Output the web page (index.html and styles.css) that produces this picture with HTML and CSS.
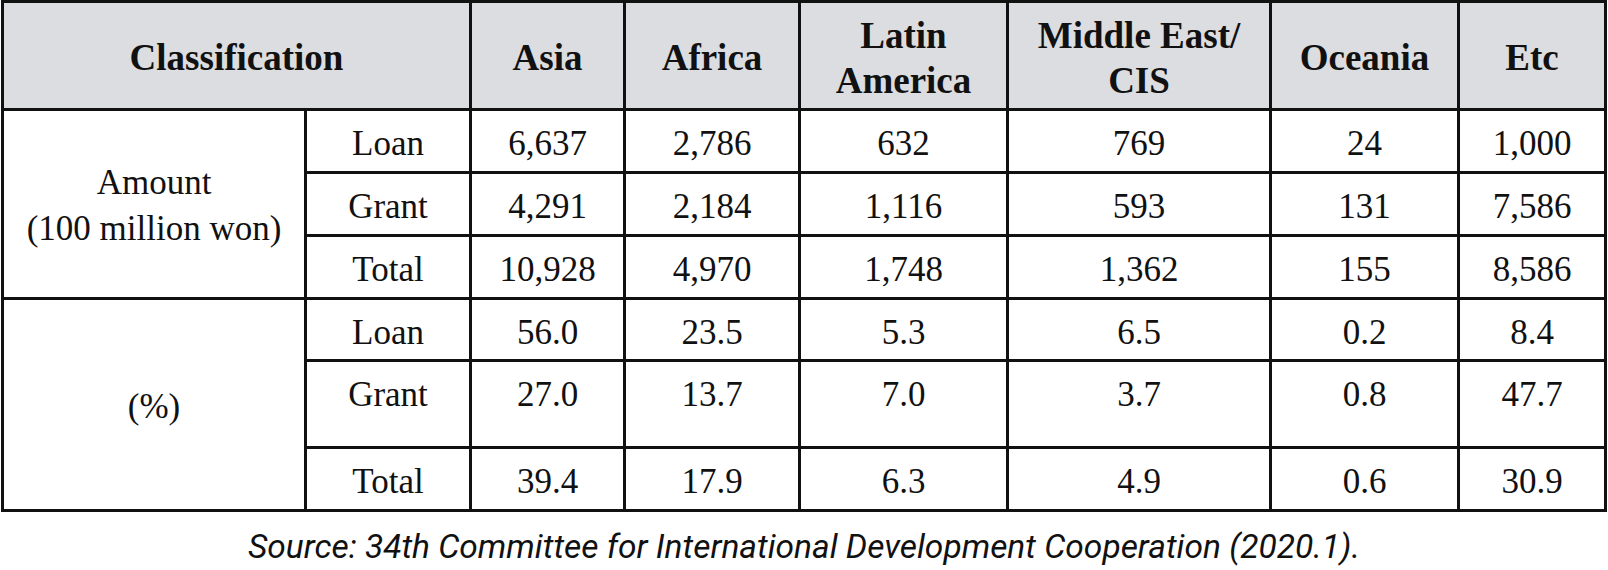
FILE: index.html
```html
<!DOCTYPE html>
<html lang="en">
<head>
<meta charset="utf-8">
<title>ODA by Region</title>
<link rel="stylesheet" href="styles.css">
</head>
<body>
<div class="table">
  <div class="cell head span2">Classification</div>
  <div class="cell head">Asia</div>
  <div class="cell head">Africa</div>
  <div class="cell head">Latin<br>America</div>
  <div class="cell head">Middle East/<br>CIS</div>
  <div class="cell head">Oceania</div>
  <div class="cell head">Etc</div>

  <div class="cell group rspan3">Amount<br>(100 million won)</div>
  <div class="cell">Loan</div>
  <div class="cell">6,637</div>
  <div class="cell">2,786</div>
  <div class="cell">632</div>
  <div class="cell">769</div>
  <div class="cell">24</div>
  <div class="cell">1,000</div>

  <div class="cell">Grant</div>
  <div class="cell">4,291</div>
  <div class="cell">2,184</div>
  <div class="cell">1,116</div>
  <div class="cell">593</div>
  <div class="cell">131</div>
  <div class="cell">7,586</div>

  <div class="cell">Total</div>
  <div class="cell">10,928</div>
  <div class="cell">4,970</div>
  <div class="cell">1,748</div>
  <div class="cell">1,362</div>
  <div class="cell">155</div>
  <div class="cell">8,586</div>

  <div class="cell group rspan3">(%)</div>
  <div class="cell">Loan</div>
  <div class="cell">56.0</div>
  <div class="cell">23.5</div>
  <div class="cell">5.3</div>
  <div class="cell">6.5</div>
  <div class="cell">0.2</div>
  <div class="cell">8.4</div>

  <div class="cell tall">Grant</div>
  <div class="cell tall">27.0</div>
  <div class="cell tall">13.7</div>
  <div class="cell tall">7.0</div>
  <div class="cell tall">3.7</div>
  <div class="cell tall">0.8</div>
  <div class="cell tall">47.7</div>

  <div class="cell">Total</div>
  <div class="cell">39.4</div>
  <div class="cell">17.9</div>
  <div class="cell">6.3</div>
  <div class="cell">4.9</div>
  <div class="cell">0.6</div>
  <div class="cell">30.9</div>
</div>
<p class="source">Source: 34th Committee for International Development Cooperation (2020.1).</p>
</body>
</html>
```

FILE: styles.css
```css
html, body {
  margin: 0;
  padding: 0;
  background: #ffffff;
}

.table {
  display: grid;
  grid-template-columns: 303px 165px 154px 175px 208px 263px 188px 147px;
  grid-template-rows: 108px 63px 63px 63px 62px 87px 63px;
  width: max-content;
  margin-left: 1px;
  border-top: 3px solid #111;
  border-left: 3px solid #111;
  font-family: "Liberation Serif", "Times New Roman", serif;
  color: #111;
}

.cell {
  box-sizing: border-box;
  display: flex;
  align-items: center;
  justify-content: center;
  text-align: center;
  border-right: 3px solid #111;
  border-bottom: 3px solid #111;
  padding-top: 6px;
  font-size: 35px;
  line-height: 1.2;
}

.head {
  background: #dcdde0;
  font-weight: bold;
  font-size: 37px;
  line-height: 45px;
  padding-top: 4px;
}

.span2 {
  grid-column: span 2;
}

.rspan3 {
  grid-row: span 3;
}

.group {
  line-height: 46px;
  padding-top: 4px;
}

.tall {
  padding-bottom: 25px;
}

.source {
  margin: 15px 0 0;
  text-align: center;
  font-family: Roboto, "Liberation Sans", sans-serif;
  font-style: italic;
  font-size: 33.5px;
  line-height: 1.2;
  color: #111;
}
```
